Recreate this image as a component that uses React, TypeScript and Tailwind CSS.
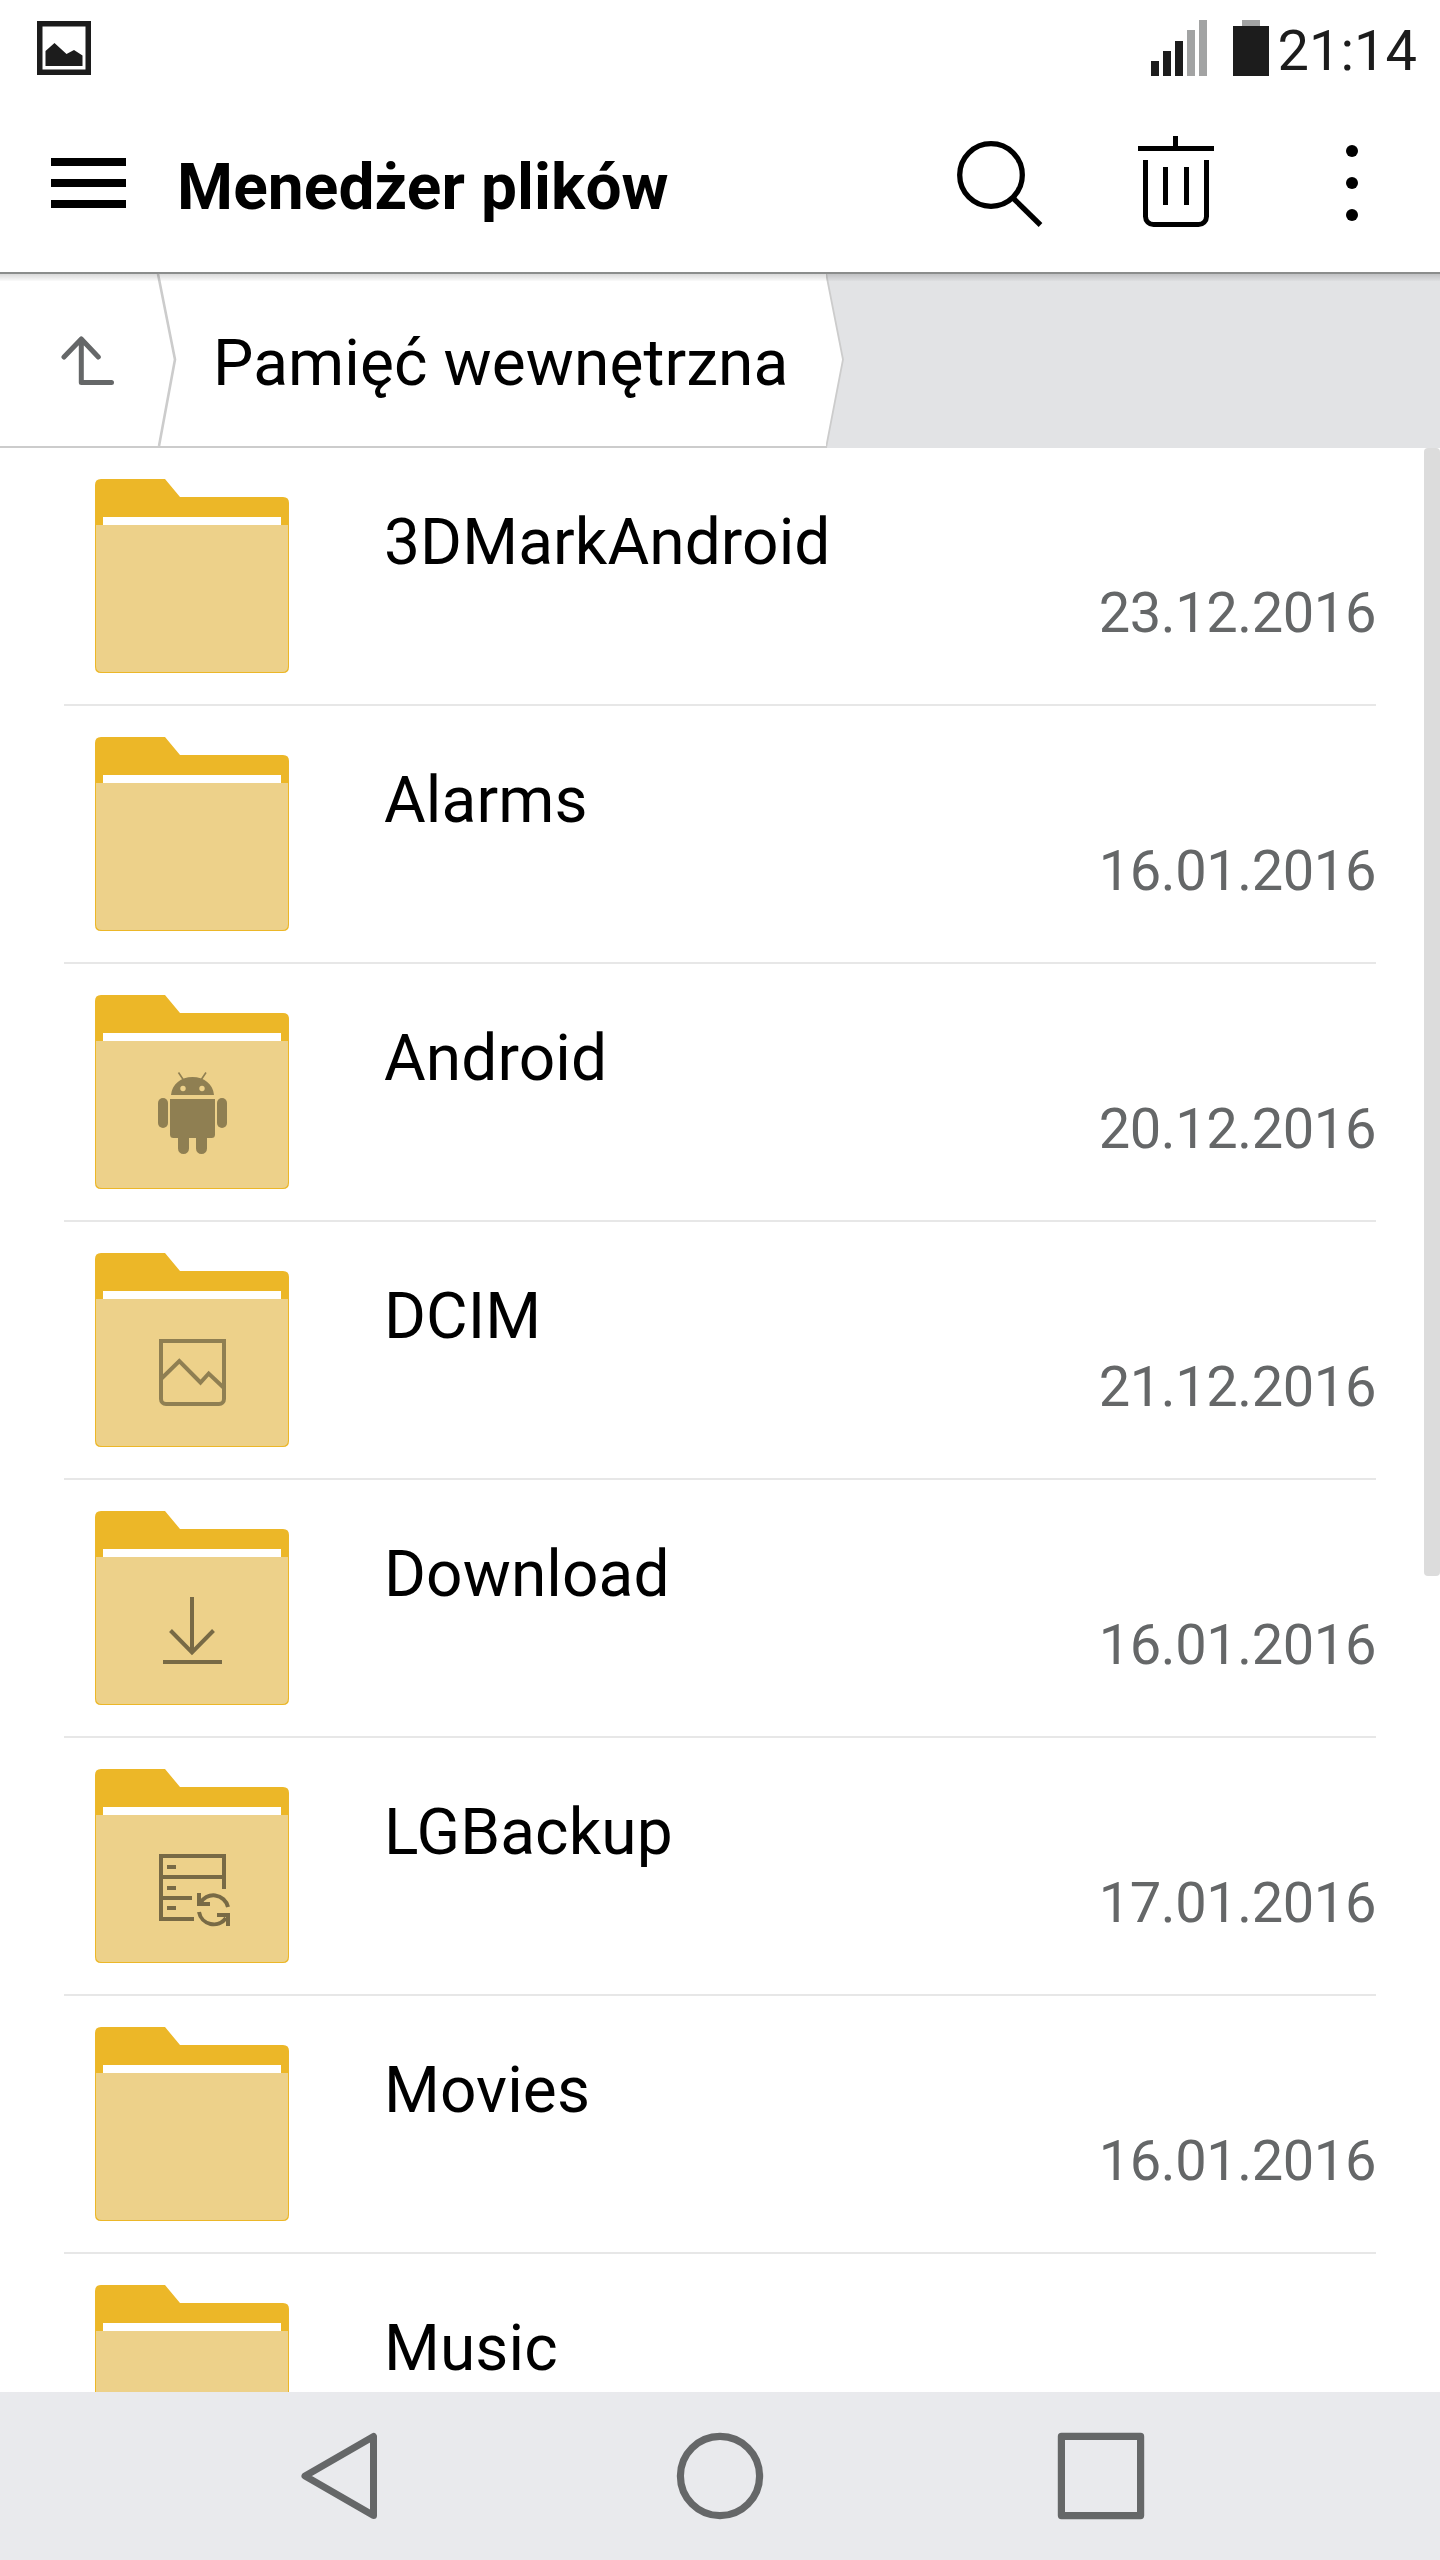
import type { ReactNode } from "react";

type Entry = {
  name: string;
  date?: string;
  badge?: ReactNode;
};

// Badges are drawn in the folder's own 194x194 coordinate space
const AndroidBadge = () => (
  <g transform="translate(45 55)" fill="#8f7f52">
    <path d="M38.5 22.5l5 7.5M66 22.5l-5 7.5" stroke="#8f7f52" strokeWidth="1.6" />
    <path d="M31 45C32 34 41 27 52.5 27S73 34 74 45z" />
    <circle cx="43" cy="38.5" r="2.7" fill="#edd18a" />
    <circle cx="62" cy="38.5" r="2.7" fill="#edd18a" />
    <path d="M30 49h45v35.5a3.5 3.5 0 0 1-3.5 3.5h-38a3.5 3.5 0 0 1-3.5-3.5z" />
    <rect x="18" y="48" width="10" height="30" rx="5" />
    <rect x="77" y="48" width="10" height="30" rx="5" />
    <path d="M38 87h11v11.500a5.500 5.500 0 0 1-11 0zM56 87h11v11.500a5.500 5.500 0 0 1-11 0z" />
  </g>
);

const PictureBadge = () => (
  <g transform="translate(45 67)" fill="none" stroke="#8f7f52" strokeWidth="4">
    <path d="M21 21h63v58a5 5 0 0 1-5 5H26a5 5 0 0 1-5-5z" />
    <path d="M21 59l18.300-18L60.500 62.500l8.200-9L84 68" />
  </g>
);

const DownloadBadge = () => (
  <g transform="translate(45 69)" fill="none" stroke="#786a45" strokeWidth="4">
    <path d="M52 17v55M30.500 50.500L52 72.500l21.500-22M23 82h59" />
  </g>
);

const BackupBadge = () => (
  <g transform="translate(45 61)" fill="none" stroke="#786a45" strokeWidth="4">
    <path d="M84 59V26H21v63h33M21 47h63M21 68h31" />
    <path d="M27 37h9M27 58h9M27 78h9" />
    <path d="M60 73.500A15 15 0 0 1 88 77M59 82A15 15 0 0 0 86 88" />
    <path d="M59 63v11h11M77 85h11v11" />
  </g>
);

const entries: Entry[] = [
  { name: "3DMarkAndroid", date: "23.12.2016" },
  { name: "Alarms", date: "16.01.2016" },
  { name: "Android", date: "20.12.2016", badge: <AndroidBadge /> },
  { name: "DCIM", date: "21.12.2016", badge: <PictureBadge /> },
  { name: "Download", date: "16.01.2016", badge: <DownloadBadge /> },
  { name: "LGBackup", date: "17.01.2016", badge: <BackupBadge /> },
  { name: "Movies", date: "16.01.2016" },
  { name: "Music" },
];

const Folder = ({ badge }: { badge?: ReactNode }) => (
  <svg width="194" height="194" viewBox="0 0 194 194" className="shrink-0">
    <path d="M0 6Q0 0 6 0H70L85 18H188Q194 18 194 24V188Q194 194 188 194H6Q0 194 0 188z" fill="#ecb728" />
    <path d="M8 38h178v8H8z" fill="#fff" />
    <path d="M1 46H193V187Q193 193 187 193H7Q1 193 1 187z" fill="#edd18a" />
    {badge}
  </svg>
);

function StatusBar() {
  return (
    <div className="flex h-24 shrink-0 items-start justify-between pl-[37px] pr-[23px] text-[#1c1c1c]">
      <svg width="54" height="54" viewBox="0 0 54 54" className="mt-[21px]">
        <path d="M0 0h54v54H0zM5.500 5.500v43h43v-43z" fill="currentColor" fillRule="evenodd" />
        <path d="M8.500 30l9-8 12 11 7.500-4 8.500 5.500V45h-37z" fill="currentColor" />
      </svg>
      <div className="flex items-start">
        <div className="mt-5 flex h-14 items-end gap-1">
          <span className="h-[15px] w-2 bg-[#1c1c1c]" />
          <span className="h-[25px] w-2 bg-[#1c1c1c]" />
          <span className="h-[35px] w-2 bg-[#1c1c1c]" />
          <span className="h-[46px] w-2 bg-[#a2a3a3]" />
          <span className="h-14 w-2 bg-[#a2a3a3]" />
        </div>
        <div className="mt-5 ml-[26px] flex flex-col items-center">
          <span className="h-1.5 w-[18px] bg-[#a2a3a3]" />
          <span className="h-[50px] w-9 bg-[#1c1c1c]" />
        </div>
        <span className="mt-[19px] ml-[9px] text-[56px] leading-[64px]">21:14</span>
      </div>
    </div>
  );
}

function Header() {
  return (
    <header className="flex h-[178px] shrink-0 items-start border-b-2 border-[#8b8d8c] pl-[51px]">
      <div className="mt-[62px] flex w-[75px] flex-col gap-[13px]">
        <span className="h-2 bg-black" />
        <span className="h-2 bg-black" />
        <span className="h-2 bg-black" />
      </div>
      <h1 className="mt-[54px] ml-[51px] grow text-[64px] leading-[76px] font-bold tracking-[0.1px]">Menedżer plików</h1>
      <svg width="86" height="88" viewBox="0 0 86 88" fill="none" stroke="#000" strokeWidth="5.300" className="mt-[44px]">
        <circle cx="34" cy="35" r="31.300" />
        <path d="M56 58l27.500 27" />
      </svg>
      <svg width="76" height="92" viewBox="0 0 76 92" fill="none" stroke="#000" strokeWidth="5" className="mt-10 ml-[95px]">
        <path d="M37.500 0v12M0 12.500h76" />
        <path d="M7.500 24v56.500a8 8 0 0 0 8 8h45a8 8 0 0 0 8-8V24M27.500 31v38M48.500 31v38" />
      </svg>
      <div className="mt-[49px] mr-[82px] ml-[132px] flex flex-col gap-5">
        <span className="size-3 rounded-full bg-black" />
        <span className="size-3 rounded-full bg-black" />
        <span className="size-3 rounded-full bg-black" />
      </div>
    </header>
  );
}

function Breadcrumbs() {
  return (
    <nav className="relative flex h-[174px] shrink-0 bg-[#e2e3e5]">
      <div className="flex w-[158px] items-start border-b-2 border-[#ccc] bg-white pl-[61px]">
        <svg width="54" height="50" viewBox="0 0 54 50" fill="none" stroke="#656768" strokeWidth="5" strokeLinejoin="round" strokeLinecap="round" className="mt-[61px]">
          <path d="M3 22L20.300 4l17 18M20.300 4v43.500H50.500" />
        </svg>
      </div>
      <div className="flex w-[668px] items-start border-b-2 border-[#ccc] bg-white">
        <svg width="20" height="172" viewBox="0 0 20 172" fill="none" stroke="#ccc" strokeWidth="2.600" className="overflow-visible">
          <path d="M0 0l17 85.500L1 172" />
        </svg>
        <span className="mt-[52px] ml-[35px] text-[64px] leading-[76px] tracking-[0.1px] whitespace-nowrap">Pamięć wewnętrzna</span>
      </div>
      <svg width="20" height="174" viewBox="0 0 20 174">
        <path d="M0-1l17 86.500L0 174z" fill="#fff" />
        <path d="M0-1l17 86.500L0 174" fill="none" stroke="#ccc" strokeWidth="1.800" />
      </svg>
      <div className="absolute inset-x-0 top-0 h-[7px] bg-linear-to-b from-black/15 to-black/2" />
    </nav>
  );
}

function Row({ entry }: { entry: Entry }) {
  return (
    <li className="mr-12 ml-16 flex h-[258px] shrink-0 items-start border-b-2 border-[#e7e7e7] pt-[31px] pl-[31px]">
      <Folder badge={entry.badge} />
      <div className="mt-[26px] ml-[95px] flex grow flex-col">
        <span className="text-[64px] leading-[76px] tracking-[0.1px]">{entry.name}</span>
        {entry.date && (
          <span className="text-right text-[56px] leading-[64px] tracking-[-0.4px] text-[#656768]">{entry.date}</span>
        )}
      </div>
    </li>
  );
}

function NavigationBar() {
  return (
    <footer className="flex h-[168px] shrink-0 items-center bg-[#e9eaed] pl-[301px]">
      <svg width="76" height="88" viewBox="0 0 76 88" fill="none" stroke="#656768" strokeWidth="7" strokeLinejoin="round">
        <path d="M72.500 4.500v79L4 44z" />
      </svg>
      <svg width="88" height="88" viewBox="0 0 88 88" fill="none" stroke="#656768" strokeWidth="7.200" className="ml-[299px]">
        <circle cx="44" cy="44" r="39.600" />
      </svg>
      <svg width="88" height="88" viewBox="0 0 88 88" fill="none" stroke="#656768" strokeWidth="7.200" strokeLinejoin="round" className="ml-[293px]">
        <path d="M4.400 4.400h79.200v79.200H4.400z" />
      </svg>
    </footer>
  );
}

export default function App() {
  return (
    <div className="flex h-[2560px] w-[1440px] flex-col overflow-hidden bg-white font-['Roboto',sans-serif] text-black">
      <StatusBar />
      <Header />
      <Breadcrumbs />
      <main className="flex min-h-0 flex-1 overflow-hidden">
        <ul className="flex w-[1424px] flex-col">
          {entries.map((entry) => (
            <Row key={entry.name} entry={entry} />
          ))}
        </ul>
        <div className="h-[1128px] w-4 rounded bg-[#dcdcdc]" />
      </main>
      <NavigationBar />
    </div>
  );
}
